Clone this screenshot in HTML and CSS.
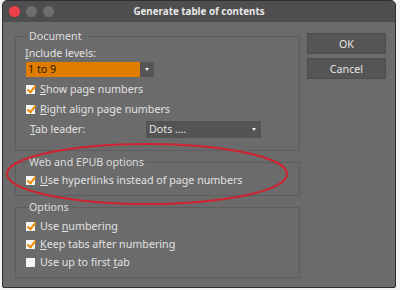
FILE: index.html
```html
<!DOCTYPE html>
<html lang="en">
<head>
    <meta charset="UTF-8">
    <title>Generate table of contents</title>
    <link rel="stylesheet" href="styles.css">
</head>
<body>
    <div class="window">
        <div class="titlebar">
            <div class="lights">
                <span class="light red"></span>
                <span class="light"></span>
                <span class="light"></span>
            </div>
            <div class="title">Generate table of contents</div>
        </div>

        <div class="content">
            <div class="groups">
                <fieldset class="group doc">
                    <legend>Document</legend>
                    <div class="field-label"><u>I</u>nclude levels:</div>
                    <div class="combo orange">
                        <span class="combo-text">1 to 9</span>
                        <span class="combo-arrow"><span class="tri"></span></span>
                    </div>
                    <div class="check"><span class="box on"></span><span><u>S</u>how page numbers</span></div>
                    <div class="check"><span class="box on"></span><span><u>R</u>ight align page numbers</span></div>
                    <div class="leader">
                        <span class="leader-label"><u>T</u>ab leader:</span>
                        <div class="combo dark">
                            <span class="combo-text">Dots ....</span>
                            <span class="combo-arrow"><span class="tri"></span></span>
                        </div>
                    </div>
                </fieldset>

                <fieldset class="group web">
                    <legend>Web and EPUB options</legend>
                    <div class="check"><span class="box on"></span><span><u>U</u>se hyperlinks instead of page numbers</span></div>
                </fieldset>

                <fieldset class="group opts">
                    <legend>Options</legend>
                    <div class="check"><span class="box on"></span><span>Use <u>n</u>umbering</span></div>
                    <div class="check"><span class="box on"></span><span><u>K</u>eep tabs after numbering</span></div>
                    <div class="check"><span class="box"></span><span>Use up to first <u>t</u>ab</span></div>
                </fieldset>
            </div>

            <div class="buttons">
                <button class="btn">OK</button>
                <button class="btn">Cancel</button>
            </div>
        </div>

        <!-- annotation drawn over the dialog -->
        <svg class="circle" width="300" height="70" viewBox="0 0 300 70">
            <ellipse cx="143" cy="33" rx="140" ry="30" fill="none" stroke="#d0232f" stroke-width="2"/>
        </svg>
    </div>
</body>
</html>
```

FILE: styles.css
```css
* {
    margin: 0;
    padding: 0;
    box-sizing: border-box;
}

body {
    background: #f4f4f4;
    font-family: 'Noto Sans', 'DejaVu Sans', sans-serif;
    font-size: 10.7px;
    color: #e2e2e2;
}

.window {
    position: relative;
    margin-left: 2px;
    width: 394px;
    height: 288px;
    background: #6b6b6b;
    border: 1px solid #2e2e2e;
    border-radius: 5px 5px 2px 2px;
    overflow: hidden;
}

.titlebar {
    height: 21px;
    background: #4e4e4e;
    display: flex;
    align-items: center;
    position: relative;
}

.lights {
    display: flex;
    gap: 6px;
    padding-left: 6px;
}

.light {
    width: 11px;
    height: 11px;
    border-radius: 50%;
    background: #6e6e6e;
}

.light.red {
    background: #ee3f46;
}

.title {
    position: absolute;
    left: 0;
    right: 0;
    text-align: center;
    font-weight: bold;
    font-size: 9.8px;
    color: #e6e6e6;
}

.content {
    display: flex;
    padding: 8px 9px 0 12px;
    gap: 7px;
}

.groups {
    width: 285px;
    display: flex;
    flex-direction: column;
    gap: 5px;
}

.group {
    border: 1px solid #5d5d5d;
    padding: 0 8px 0 9px;
}

.group legend {
    padding: 0 1px;
    margin-left: 3px;
    color: #dddddd;
    line-height: 13px;
}

.doc {
    height: 121px;
}

.web {
    height: 40px;
}

.opts {
    height: 77px;
}

.field-label {
    margin-top: 3px;
    line-height: 14px;
}

.combo {
    display: flex;
    height: 16px;
    align-items: center;
}

.combo.orange {
    width: 128px;
    height: 15px;
    margin: 2px 0 2px 1px;
    background: #555;
}

.combo.orange .combo-text {
    background: #e07d00;
    color: #2a1a00;
    height: 100%;
    flex: 1;
    padding-left: 2px;
    line-height: 15px;
}

.combo.dark {
    width: 115px;
    height: 17px;
    background: #545454;
}

.combo.dark .combo-text {
    flex: 1;
    padding-left: 3px;
}

.combo-arrow {
    width: 14px;
    height: 100%;
    display: flex;
    align-items: center;
    justify-content: center;
}

.tri {
    width: 0;
    height: 0;
    border-left: 2.5px solid transparent;
    border-right: 2.5px solid transparent;
    border-top: 3px solid #f0f0f0;
}

.check {
    display: flex;
    align-items: center;
    gap: 5px;
    height: 20px;
    padding-left: 1px;
}

.box {
    width: 9px;
    height: 9px;
    background: #f6f6f6;
    position: relative;
}

.box.on::after {
    content: '';
    position: absolute;
    left: 3px;
    top: -1px;
    width: 3px;
    height: 7px;
    border-right: 2px solid #f08a00;
    border-bottom: 2px solid #f08a00;
    transform: rotate(40deg);
}

.leader {
    display: flex;
    align-items: center;
    height: 20px;
}

.leader-label {
    width: 121px;
    padding-left: 5px;
}

.web .check {
    margin-top: 1px;
}

.opts .check {
    height: 18px;
}

.opts .check:first-of-type {
    margin-top: 3px;
}

.buttons {
    display: flex;
    flex-direction: column;
    gap: 4px;
    margin-top: 3px;
}

.btn {
    width: 79px;
    height: 21px;
    background: #555;
    border: 1px solid #4c4c4c;
    color: #e6e6e6;
    font-family: inherit;
    font-size: 10.7px;
}

.circle {
    position: absolute;
    left: 1px;
    top: 140px;
}
```
